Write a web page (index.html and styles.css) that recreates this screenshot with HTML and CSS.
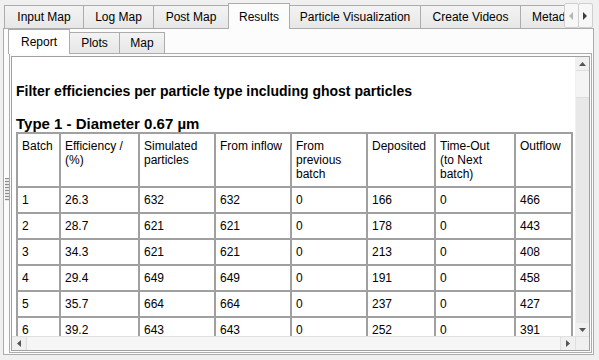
FILE: index.html
```html
<!DOCTYPE html>
<html>
<head>
<meta charset="utf-8">
<link rel="stylesheet" href="styles.css">
</head>
<body>
<div class="app">
  <div class="tabbar">
    <div class="tabs">
      <div class="tab w-input">Input Map</div>
      <div class="tab w-log">Log Map</div>
      <div class="tab w-post">Post Map</div>
      <div class="tab sel w-results">Results</div>
      <div class="tab w-particle">Particle Visualization</div>
      <div class="tab w-videos">Create Videos</div>
      <div class="tab w-meta">Metadata</div>
    </div>
    <div class="tabscroll">
      <div class="sbtn"><svg width="5" height="8" viewBox="0 0 5 8"><polygon points="4,0 4,8 0,4" fill="#b4b4b4"/></svg></div>
      <div class="sbtn"><svg width="5" height="8" viewBox="0 0 5 8"><polygon points="0,0 0,8 4,4" fill="#3c3c3c"/></svg></div>
    </div>
  </div>
  <div class="pane">
    <div class="gripcol"><div class="grip"></div></div>
    <div class="inner">
      <div class="tabbar2">
        <div class="tab2 sel2 w-report">Report</div>
        <div class="tab2 w-plots">Plots</div>
        <div class="tab2 w-map">Map</div>
      </div>
      <div class="pane2">
        <div class="browser">
          <div class="viewport">
            <div class="h1">Filter efficiencies per particle type including ghost particles</div>
            <div class="h2">Type 1 - Diameter 0.67 µm</div>
            <table class="grid">
              <tr>
                <th class="c1">Batch</th>
                <th class="c2">Efficiency /<br>(%)</th>
                <th class="c3">Simulated<br>particles</th>
                <th class="c4">From inflow</th>
                <th class="c5">From<br>previous<br>batch</th>
                <th class="c6">Deposited</th>
                <th class="c7">Time-Out<br>(to Next<br>batch)</th>
                <th class="c8">Outflow</th>
              </tr>
              <tr><td>1</td><td>26.3</td><td>632</td><td>632</td><td>0</td><td>166</td><td>0</td><td>466</td></tr>
              <tr><td>2</td><td>28.7</td><td>621</td><td>621</td><td>0</td><td>178</td><td>0</td><td>443</td></tr>
              <tr><td>3</td><td>34.3</td><td>621</td><td>621</td><td>0</td><td>213</td><td>0</td><td>408</td></tr>
              <tr><td>4</td><td>29.4</td><td>649</td><td>649</td><td>0</td><td>191</td><td>0</td><td>458</td></tr>
              <tr><td>5</td><td>35.7</td><td>664</td><td>664</td><td>0</td><td>237</td><td>0</td><td>427</td></tr>
              <tr><td>6</td><td>39.2</td><td>643</td><td>643</td><td>0</td><td>252</td><td>0</td><td>391</td></tr>
            </table>
          </div>
          <div class="vscroll">
            <div class="vbtn"><svg width="7" height="4" viewBox="0 0 7 4"><polygon points="0,4 7,4 3.5,0" fill="#555"/></svg></div>
            <div class="vthumb"></div>
            <div class="vtrack"></div>
            <div class="vbtn"><svg width="7" height="4" viewBox="0 0 7 4"><polygon points="0,0 7,0 3.5,4" fill="#555"/></svg></div>
          </div>
          <div class="hscroll">
            <div class="hbtn"><svg width="4" height="7" viewBox="0 0 4 7"><polygon points="4,0 4,7 0,3.5" fill="#555"/></svg></div>
            <div class="hthumb"></div>
            <div class="hbtn"><svg width="4" height="7" viewBox="0 0 4 7"><polygon points="0,0 0,7 4,3.5" fill="#555"/></svg></div>
          </div>
          <div class="corner"></div>
        </div>
      </div>
    </div>
  </div>
</div>
</body>
</html>
```

FILE: styles.css
```css
* { box-sizing: border-box; }
html, body { margin: 0; padding: 0; }
body {
  background: #f0f0f0;
  font-family: "Liberation Sans", Arial, sans-serif;
  font-size: 12px;
  color: #000;
  width: 599px;
  height: 360px;
  overflow: hidden;
}
.app { padding: 3px 0 0 3px; }

/* outer tab bar */
.tabbar { display: flex; width: 591px; height: 25px; }
.tabs {
  flex: 1;
  display: flex;
  align-items: flex-end;
  height: 26px;
  margin-bottom: -1px;
  padding-left: 1px;
  overflow: hidden;
  position: relative;
  z-index: 1;
}
.tab {
  flex: none;
  height: 23px;
  margin-bottom: 1px;
  margin-left: -1px;
  border: 1px solid #acacac;
  border-bottom: none;
  background: linear-gradient(#f3f3f3, #e7e7e7);
  text-align: center;
  line-height: 14px;
  padding-top: 4px;
  white-space: nowrap;
}
.tab:first-child { margin-left: 0; }
.tab.sel {
  height: 26px;
  margin-bottom: 0;
  padding-top: 6px;
  background: #fcfcfc;
  position: relative;
  z-index: 2;
}
.w-input { width: 80px; }
.w-log { width: 71px; }
.w-post { width: 76px; }
.w-results { width: 62px; }
.w-particle { width: 132px; }
.w-videos { width: 101px; }
.w-meta { width: 90px; text-align: left; padding-left: 11px; }

.tabscroll { flex: none; display: flex; height: 25px; margin-right: 1px; }
.sbtn {
  width: 15px;
  height: 25px;
  border: 1px solid #cfcfcf;
  border-radius: 2px;
  background: #f7f7f7;
  display: flex;
  align-items: center;
  justify-content: center;
}
.sbtn + .sbtn { margin-left: -1px; }

/* outer pane */
.pane {
  width: 591px;
  height: 327px;
  border: 1px solid #acacac;
  background: #fcfcfc;
  display: flex;
  padding: 0 1px 1px 0;
}
.gripcol {
  flex: none;
  width: 5px;
  display: flex;
  align-items: center;
  justify-content: flex-end;
  padding-bottom: 4px;
}
.grip {
  width: 4px;
  height: 23px;
  background: repeating-linear-gradient(#8c8c8c 0 1px, #e8e8e8 1px 3px);
}
.inner { flex: 1; display: flex; flex-direction: column; min-width: 0; }

/* inner tab bar */
.tabbar2 {
  display: flex;
  align-items: flex-end;
  height: 25px;
  margin-bottom: -1px;
  position: relative;
  z-index: 1;
}
.tab2 {
  flex: none;
  height: 21px;
  margin-bottom: 1px;
  margin-left: -1px;
  border: 1px solid #acacac;
  border-bottom: none;
  background: linear-gradient(#f3f3f3, #e7e7e7);
  text-align: center;
  line-height: 14px;
  padding-top: 3px;
}
.tab2.sel2 {
  height: 25px;
  margin-bottom: 0;
  padding-top: 5px;
  background: #fff;
}
.w-report { width: 62px; }
.w-plots { width: 51px; }
.w-map { width: 46px; }

.pane2 {
  height: 300px;
  border: 1px solid #acacac;
  background: #fcfcfc;
  padding: 2px 1px 1px 1px;
}
.browser {
  height: 295px;
  border: 1px solid #a0a0a0;
  background: #fff;
  display: grid;
  grid-template-columns: 1fr 14px;
  grid-template-rows: 1fr 14px;
}
.viewport { overflow: hidden; padding-left: 4px; min-width: 0; min-height: 0; }

.h1 {
  margin-top: 26px;
  font-weight: bold;
  font-size: 14px;
  line-height: 17px;
  white-space: nowrap;
}
.h2 {
  margin-top: 15px;
  font-weight: bold;
  font-size: 15px;
  line-height: 17px;
  white-space: nowrap;
}
.grid {
  border-collapse: collapse;
  table-layout: fixed;
  width: 557px;
}
.grid th, .grid td {
  border: 2px solid #a0a0a0;
  padding: 5px 4px;
  line-height: 14px;
  font-size: 12px;
  font-weight: normal;
  text-align: left;
  vertical-align: top;
  white-space: nowrap;
  overflow: hidden;
}
.c1 { width: 43px; }
.c2 { width: 79px; }
.c3 { width: 76px; }
.c4 { width: 76px; }
.c5 { width: 76px; }
.c6 { width: 68px; }
.c7 { width: 80px; }
.c8 { width: 57px; }

/* scrollbars */
.vscroll { display: flex; flex-direction: column; background: #e8e8e8; border-left: 1px solid #f0f0f0; }
.vbtn { height: 13px; display: flex; align-items: center; justify-content: center; background: #f0f0f0; }
.vthumb { height: 28px; background: #f4f4f4; border-top: 1px solid #dedede; border-bottom: 1px solid #dedede; }
.vtrack { flex: 1; }
.hscroll { display: flex; background: #f0f0f0; border-top: 1px solid #e0e0e0; }
.hbtn { width: 14px; display: flex; align-items: center; justify-content: center; }
.hthumb { flex: 1; background: #f6f6f6; border-left: 1px solid #dedede; border-right: 1px solid #dedede; }
.corner { background: #f0f0f0; border-left: 1px solid #e0e0e0; border-top: 1px solid #e0e0e0; }
```
